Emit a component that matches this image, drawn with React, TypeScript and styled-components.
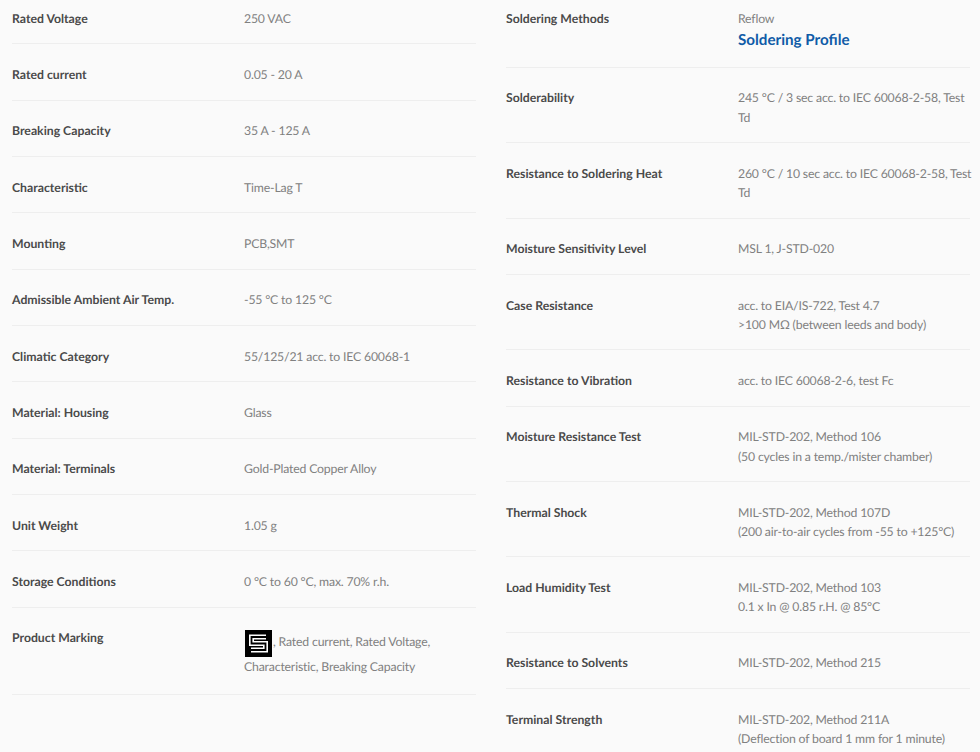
import React from 'react';
import styled, { createGlobalStyle } from 'styled-components';

const GlobalStyle = createGlobalStyle`
  html, body {
    margin: 0;
    height: 752px;
    overflow: hidden;
    background: #fafafa;
  }
  body {
    font-family: Lato, "Open Sans", Arial, sans-serif;
    font-size: 12.25px;
    line-height: 19.5px;
    text-rendering: geometricPrecision;
  }
`;

const Page = styled.div`
  display: grid;
  grid-template-columns: 464px 464px;
  column-gap: 30px;
  align-items: start;
  margin-top: -12px;
  padding-left: 12px;
`;

const Column = styled.div`
  display: flex;
  flex-direction: column;
`;

const Row = styled.div`
  box-sizing: border-box;
  display: grid;
  grid-template-columns: 232px 232px;
  min-height: 56.35px;
  padding: 20.5px 0 14.85px;
  border-bottom: 1px solid #eeeeee;
`;

const Label = styled.div`
  font-weight: 700;
  color: #4a4a4a;
`;

const Value = styled.div`
  color: #808080;
  letter-spacing: -0.17px;
  white-space: nowrap;
`;

const ProfileLink = styled.a`
  display: block;
  margin: 2.5px 0 2.15px;
  font-size: 15.2px;
  font-weight: 700;
  letter-spacing: 0;
  color: #0f5ba7;
  text-decoration: none;
`;

const MarkingLine = styled.div`
  &:last-child {
    padding-bottom: 2.65px;
  }
`;

const LogoMark = styled.svg`
  width: 27px;
  height: 27px;
  vertical-align: middle;
  margin: 2px 1px 0 1px;
`;

const SchurterLogo = () => (
  <LogoMark viewBox="0 0 27 27">
    <rect width="27" height="27" fill="#000" />
    <path d="M21 7H6.5V13.5H20.5V20H6" fill="none" stroke="#fff" strokeWidth="5" />
    <path d="M21 7H6.5V13.5H20.5V20H6" fill="none" stroke="#000" strokeWidth="1.8" />
  </LogoMark>
);

type Spec = { label: string; lines: string[] };

const leftSpecs: Spec[] = [
  { label: 'Rated Voltage', lines: ['250 VAC'] },
  { label: 'Rated current', lines: ['0.05 - 20 A'] },
  { label: 'Breaking Capacity', lines: ['35 A - 125 A'] },
  { label: 'Characteristic', lines: ['Time-Lag T'] },
  { label: 'Mounting', lines: ['PCB,SMT'] },
  { label: 'Admissible Ambient Air Temp.', lines: ['-55 °C to 125 °C'] },
  { label: 'Climatic Category', lines: ['55/125/21 acc. to IEC 60068-1'] },
  { label: 'Material: Housing', lines: ['Glass'] },
  { label: 'Material: Terminals', lines: ['Gold-Plated Copper Alloy'] },
  { label: 'Unit Weight', lines: ['1.05 g'] },
  { label: 'Storage Conditions', lines: ['0 °C to 60 °C, max. 70% r.h.'] },
];

const rightSpecs: Spec[] = [
  { label: 'Solderability', lines: ['245 °C / 3 sec acc. to IEC 60068-2-58, Test', 'Td'] },
  { label: 'Resistance to Soldering Heat', lines: ['260 °C / 10 sec acc. to IEC 60068-2-58, Test', 'Td'] },
  { label: 'Moisture Sensitivity Level', lines: ['MSL 1, J-STD-020'] },
  { label: 'Case Resistance', lines: ['acc. to EIA/IS-722, Test 4.7', '>100 MΩ (between leeds and body)'] },
  { label: 'Resistance to Vibration', lines: ['acc. to IEC 60068-2-6, test Fc'] },
  { label: 'Moisture Resistance Test', lines: ['MIL-STD-202, Method 106', '(50 cycles in a temp./mister chamber)'] },
  { label: 'Thermal Shock', lines: ['MIL-STD-202, Method 107D', '(200 air-to-air cycles from -55 to +125°C)'] },
  { label: 'Load Humidity Test', lines: ['MIL-STD-202, Method 103', '0.1 x In @ 0.85 r.H. @ 85°C'] },
  { label: 'Resistance to Solvents', lines: ['MIL-STD-202, Method 215'] },
  { label: 'Terminal Strength', lines: ['MIL-STD-202, Method 211A', '(Deflection of board 1 mm for 1 minute)'] },
];

const SpecRow = ({ label, lines }: Spec) => (
  <Row>
    <Label>{label}</Label>
    <Value>
      {lines.map((line) => (
        <div key={line}>{line}</div>
      ))}
    </Value>
  </Row>
);

export default function App() {
  return (
    <Page>
      <GlobalStyle />
      <Column>
        {leftSpecs.map((spec) => (
          <SpecRow key={spec.label} {...spec} />
        ))}
        <Row>
          <Label>Product Marking</Label>
          <Value>
            <MarkingLine>
              <SchurterLogo />, Rated current, Rated Voltage,
            </MarkingLine>
            <MarkingLine>Characteristic, Breaking Capacity</MarkingLine>
          </Value>
        </Row>
      </Column>
      <Column>
        <Row>
          <Label>Soldering Methods</Label>
          <Value>
            Reflow
            <ProfileLink href="#">Soldering Profile</ProfileLink>
          </Value>
        </Row>
        {rightSpecs.map((spec) => (
          <SpecRow key={spec.label} {...spec} />
        ))}
      </Column>
    </Page>
  );
}
